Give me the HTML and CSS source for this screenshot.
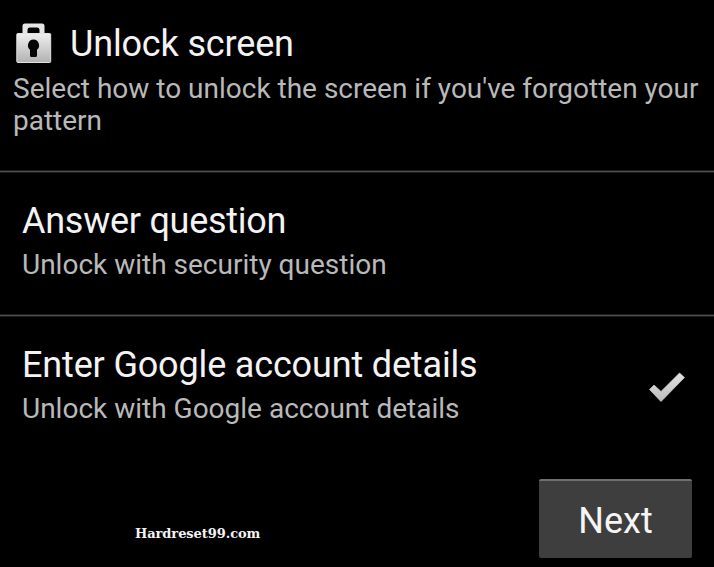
FILE: index.html
```html
<!DOCTYPE html>
<html lang="en">
<head>
<meta charset="utf-8">
<title>Unlock screen</title>
<link rel="stylesheet" href="styles.css">
</head>
<body>
<main class="screen">
  <header class="header">
    <div class="title-row">
      <svg class="lock" viewBox="0 0 36 42" width="36" height="42" aria-hidden="true">
        <defs>
          <linearGradient id="metal" x1="0" y1="0" x2="0" y2="1"><stop offset="0" stop-color="#efefef"/><stop offset="1" stop-color="#b2b2b2"/></linearGradient>
        </defs>
        <path fill-rule="evenodd" d="M6.500 12V4Q6.500 1.500 9 1.500H26Q28.500 1.500 28.500 4V12ZM11.500 11.500V8Q11.500 5.500 14 5.500H21Q23.500 5.500 23.500 8V11.500Z" fill="#e5e5e5"/>
        <rect x=".8" y="11.500" width="33.900" height="29" rx="1" fill="url(#metal)" stroke="#e2e2e2"/>
        <path d="M17.500 17.500a5.800 5.800 0 0 1 3.500 10.200V33.500a1.500 1.500 0 0 1-1.500 1.500h-4a1.500 1.500 0 0 1-1.500-1.500V27.700A5.800 5.800 0 0 1 17.500 17.500Z" fill="#050505"/>
      </svg>
      <h1 class="title">Unlock screen</h1>
    </div>
    <p class="summary">Select how to unlock the screen if you've forgotten your<br>pattern</p>
  </header>
  <section class="option">
    <h2 class="label answer">Answer question</h2>
    <p class="detail">Unlock with security question</p>
  </section>
  <section class="option chosen">
    <div>
      <h2 class="label">Enter Google account details</h2>
      <p class="detail">Unlock with Google account details</p>
    </div>
    <svg class="check" viewBox="0 0 38 32" width="38" height="32" aria-hidden="true">
      <defs>
        <linearGradient id="tick" x1="0" y1="0" x2="0" y2="1"><stop offset="0" stop-color="#e2e2e2"/><stop offset="1" stop-color="#bdbdbd"/></linearGradient>
      </defs>
      <path d="M1.500 17.500L6 13L13 19.500L31.500 1L36.500 5.500L13 29.500Z" fill="url(#tick)" stroke="#d6d6d6" stroke-width=".7"/>
    </svg>
  </section>
  <footer class="footer">
    <span class="credit">Hardreset99.com</span>
    <button class="next" type="button">Next</button>
  </footer>
</main>
</body>
</html>
```
FILE: styles.css
```css
* { box-sizing: border-box; }
body { margin: 0; background: #000; color: #f3f3f3; font-family: Roboto, sans-serif; }
h1, h2, p { margin: 0; font-weight: 400; }
.screen { width: 714px; height: 567px; overflow: hidden; display: flex; flex-direction: column; }
.header { height: 171px; padding: 22px 0 0 13px; }
.title-row { display: flex; height: 43px; gap: 18px; padding-left: 3px; }
.title, .label { font-size: 36px; line-height: 42px; letter-spacing: -0.16px; white-space: nowrap; }
.title { padding-top: 1px; }
.answer { letter-spacing: -0.26px; }
.summary { margin-top: 8px; font-size: 28px; line-height: 32px; color: #b9b9b9; white-space: nowrap; }
.option { height: 144px; border-top: 1px solid #505050; box-shadow: 0 -1px #1c1c1c, inset 0 1px #1c1c1c; padding: 28px 22px 0; }
.chosen { display: flex; justify-content: space-between; }
.detail { font-size: 28px; line-height: 32px; margin-top: 7px; color: #b9b9b9; white-space: nowrap; }
.check { margin: 28px 6px 0 0; }
.footer { display: flex; justify-content: space-between; padding: 20px 22px 0 135px; }
.credit { font: bold 13px/20px "DejaVu Serif", serif; letter-spacing: -0.07px; padding-top: 45px; }
.next { width: 153px; height: 79px; border: 0; border-top: 2px solid #707070; border-radius: 2px; background: #3e3e3e; color: #f5f5f5; font: 36px Roboto, sans-serif; padding: 3px 0 0; }
```
